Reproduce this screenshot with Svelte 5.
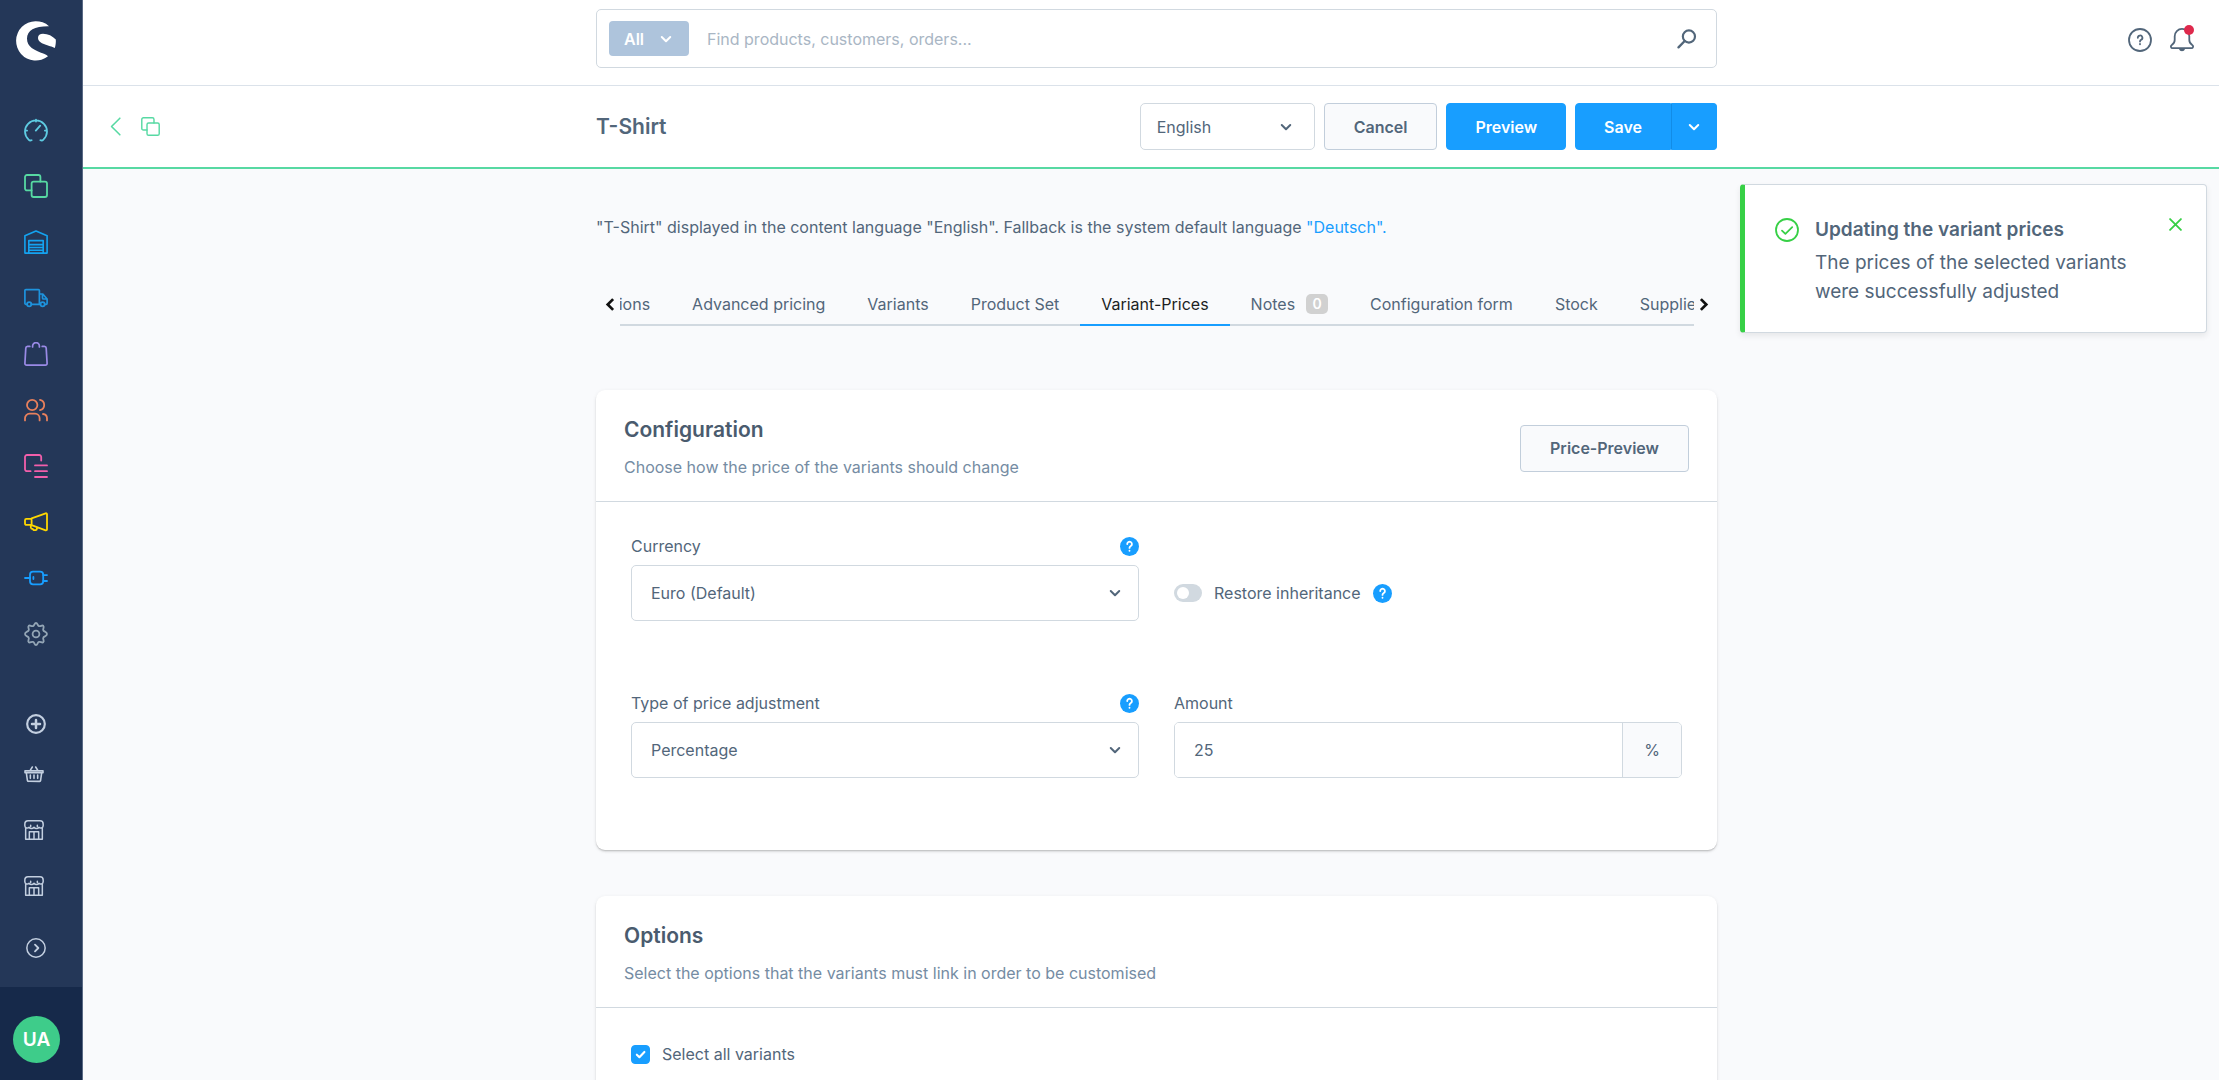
<script>
  import { onMount } from 'svelte';

  const navItems = [
    { name: 'Dashboard', icon: 'gauge', color: '#5ecbe2' },
    { name: 'Catalogues', icon: 'copy', color: '#57d9a3' },
    { name: 'Warehouse', icon: 'warehouse', color: '#14a3f0' },
    { name: 'Shipping', icon: 'truck', color: '#1e93dd' },
    { name: 'Orders', icon: 'bag', color: '#9a8ae6' },
    { name: 'Customers', icon: 'users', color: '#e8805c' },
    { name: 'Content', icon: 'content', color: '#f25fab' },
    { name: 'Marketing', icon: 'megaphone', color: '#ffd700' },
    { name: 'Extensions', icon: 'plug', color: '#189eff' },
    { name: 'Settings', icon: 'gear', color: '#93a5b5' }
  ];

  const channelItems = [
    { name: 'Headless', icon: 'basket' },
    { name: 'Storefront', icon: 'store' },
    { name: 'Second storefront', icon: 'store' }
  ];

  const tabs = [
    { label: 'Specifications' },
    { label: 'Advanced pricing' },
    { label: 'Variants' },
    { label: 'Product Set' },
    { label: 'Variant-Prices' },
    { label: 'Notes', count: 0 },
    { label: 'Configuration form' },
    { label: 'Stock' },
    { label: 'Suppliers' }
  ];

  let activeTab = $state('Variant-Prices');
  let language = $state('English');
  let currency = $state('Euro (Default)');
  let adjustment = $state('Percentage');
  let amount = $state('25');
  let search = $state('');
  let restore = $state(false);
  let selectAll = $state(true);
  let toastOpen = $state(true);
  let tabList;

  onMount(() => {
    // keep the end of the first tab in view, as a hint that there is more to the left
    const second = tabList.children[1];
    tabList.scrollLeft = second.offsetLeft - tabList.offsetLeft - 51;
  });

  function scrollTabs(by) {
    tabList.scrollBy({ left: by, behavior: 'smooth' });
  }
</script>

{#snippet icon(name)}
  <svg class="icon" viewBox="0 0 24 24" fill="none" stroke="currentColor" stroke-width="1.8" stroke-linecap="round" stroke-linejoin="round" aria-hidden="true">
    {#if name === 'gauge'}
      <path d="M7.6 22.2a2.6 2.6 0 0 1-3-.6 11 11 0 1 1 14.8 0 2.6 2.6 0 0 1-3 .6M12 1.600v2M1.100 12.600h2M20.900 12.600h2M11.800 12.600l4.400-5" />
    {:else if name === 'copy'}
      <path d="M7.600 16.400H3a2 2 0 0 1-2-2V3a2 2 0 0 1 2-2h11.400a2 2 0 0 1 2 2v4.600" />
      <rect x="7.600" y="7.600" width="15.400" height="15.400" rx="2" />
    {:else if name === 'warehouse'}
      <path stroke-width="1.600" d="M.9 23.100V5.800L12 1l11.100 4.800v17.300zM4.800 23.100V10.600h14.400v12.500M4.800 14.600h14.400M4.800 17.500h14.400M4.800 20.300h14.400" />
    {:else if name === 'truck'}
      <path stroke-width="1.700" d="M3 18.300H1.900a1 1 0 0 1-1-1V4.600a1 1 0 0 1 1-1h12.500a1 1 0 0 1 1 1v13.700M7.400 18.300h9M15.400 8h3.400l4.300 5v4.300a1 1 0 0 1-1 1h-1.300M23 13h-3.500a1 1 0 0 1-1-1V8" />
      <circle cx="5.200" cy="18.300" r="2.100" /><circle cx="18.600" cy="18.300" r="2.100" />
    {:else if name === 'bag'}
      <path stroke-width="1.700" d="M5.800 4.400H3.600a1.800 1.800 0 0 0-1.800 1.700L.9 21.400A1.700 1.700 0 0 0 2.600 23.100h18.800a1.700 1.700 0 0 0 1.700-1.800l-.9-15.200a1.800 1.800 0 0 0-1.800-1.700h-2.200M8.600 5V4a3.400 3.400 0 0 1 6.800 0v1" />
    {:else if name === 'users'}
      <circle cx="8.200" cy="7" r="5.200" /><path d="M16 1.900a5.200 5.200 0 0 1 0 10.200M1 22.400v-2.200a4.500 4.500 0 0 1 4.500-4.500h5.600a4.500 4.500 0 0 1 4.500 4.500v2.200M19 16a4.500 4.500 0 0 1 4 4.300v2.100" />
    {:else if name === 'content'}
      <path d="M6.600 17.200H3a2 2 0 0 1-2-2V3a2 2 0 0 1 2-2h12.200a2 2 0 0 1 2 2v3.600M11 11.400h12M11 17.200h12M11 23h12" />
    {:else if name === 'megaphone'}
      <path d="M7.600 8.400 21.700 3.300a1 1 0 0 1 1.300 1v15a1 1 0 0 1-1.300 1L7.600 15.200zM7.600 8.900H2.400A1.400 1.400 0 0 0 1 10.300v3.200a1.400 1.400 0 0 0 1.400 1.400h5.200zM6.800 15v2.600a1.800 1.800 0 0 0 1.800 1.400l1.200 1.200h2a1.400 1.400 0 0 0 1.100-1.400v-1.300" />
    {:else if name === 'plug'}
      <path d="M1 12h5M19.200 9.100h3.800M19.200 15h3.800M9.400 11v2" /><rect x="6" y="5.700" width="13.200" height="12.600" rx="3" />
    {:else if name === 'gear'}
      <path d="M12 1c1.700 0 1.300 2.500 2.900 3.100 1.600.7 3.100-1.400 4.400-.3 1.400 1.300-.8 2.900 0 4.500.6 1.500 3.700 1.300 3.700 3.700s-3.100 2.200-3.700 3.700c-.8 1.600 1.400 3.200 0 4.500-1.300 1.100-2.800-1-4.400-.3-1.600.6-1.200 3.100-2.900 3.100s-1.300-2.500-2.900-3.100c-1.600-.7-3.100 1.400-4.400.3-1.400-1.300.8-2.900 0-4.500C4.100 14.200 1 14.400 1 12s3.100-2.200 3.700-3.700c.8-1.600-1.400-3.200 0-4.500 1.300-1.100 2.800 1 4.400.3C10.700 3.500 10.300 1 12 1z" />
      <circle cx="12" cy="12" r="3.400" />
    {:else if name === 'basket'}
      <path stroke-width="1.900" d="M1.200 8.200h21.600v2.200H1.200zM2.800 10.600l1.300 9.200a1.200 1.200 0 0 0 1.200 1h13.400a1.200 1.200 0 0 0 1.200-1l1.300-9.200M7.600 7.400 10 3.600M16.400 7.400 14 3.600M7.600 13.200v4M12 13.200v4M16.400 13.200v4" />
    {:else if name === 'store'}
      <path stroke-width="1.800" d="M2 10.200v12.800h20V10.200M4.800 1h14.400A3.800 3.800 0 0 1 23 4.800v2.100a2.900 2.900 0 0 1-5 1.900 3.800 3.800 0 0 1-6 0 3.800 3.800 0 0 1-6 0 2.900 2.900 0 0 1-5-1.900V4.800A3.800 3.800 0 0 1 4.800 1zM6.400 22.800v-8.600h11.200v8.600M12 14.200v8.600M8 6.400v1.400M16 6.400v1.400" />
    {:else if name === 'plus-circle'}
      <circle cx="12" cy="12" r="10.600" stroke-width="2.600" /><path stroke-width="3" d="M12 7.200v9.600M7.200 12h9.600" />
    {:else if name === 'arrow-circle'}
      <circle cx="12" cy="12" r="11" stroke-width="1.800" /><path stroke-width="2.200" d="m10.800 8 4 4-4 4" />
    {:else if name === 'chevron-left'}
      <path stroke-width="2" d="M17.500 1.500 7 12l10.500 10.500" />
    {:else if name === 'search'}
      <circle cx="14.300" cy="9" r="7.300" stroke-width="2.600" /><path stroke-width="2.800" d="M9.200 14.400 1.800 22" />
    {:else if name === 'help'}
      <circle cx="12" cy="12" r="11" /><path d="M9.800 9.800a2.300 2.300 0 1 1 3.400 2c-.8.500-1.200.9-1.200 1.700M12 16v.3" />
    {:else if name === 'bell'}
      <path d="M2.700 20.200c-1.900 0-2.400-2.200-.9-3.200 1.800-1.200 2.900-2.600 2.900-5V8.200a7.300 7.300 0 0 1 14.600 0V12c0 2.400 1.100 3.800 2.900 5 1.500 1 1 3.200-.9 3.200z" /><path fill="currentColor" d="M9.800 20.800a2.300 2.300 0 0 0 4.400 0z" />
    {:else if name === 'check-circle'}
      <circle cx="12" cy="12" r="11" /><path d="m7 12.600 3.400 3.200 6.800-6.600" />
    {:else if name === 'close'}
      <path stroke-width="3.400" d="M2 2l20 20M22 2 2 22" />
    {:else if name === 'check'}
      <path stroke-width="4.600" d="m4 12.500 5.600 5.500L20.500 6.500" />
    {:else if name === 'question'}
      <path stroke-width="2.600" d="M8.800 8.600a3.300 3.300 0 1 1 5 2.800c-1.200.7-1.800 1.300-1.800 2.600M12 17.900v.2" />
    {:else if name === 'down'}
      <path stroke-width="4" d="M3.500 8l8.500 8.500L20.500 8" />
    {:else if name === 'left'}
      <path stroke-width="5" stroke-linecap="butt" stroke-linejoin="miter" d="M15 2 5 12l10 10" />
    {:else if name === 'right'}
      <path stroke-width="5" stroke-linecap="butt" stroke-linejoin="miter" d="M9 2l10 10L9 22" />
    {/if}
  </svg>
{/snippet}

{#snippet helpDot(label)}
  <button type="button" class="help-dot" aria-label={label}>{@render icon('question')}</button>
{/snippet}

<div class="app">
  <aside class="sidebar">
    <a class="logo" href="#home" aria-label="Home">
      <svg viewBox="0 0 40 40" fill="#fff" aria-hidden="true">
        <path d="M33 5.200A19.700 19.700 0 1 0 32 35.300Q31 34 28 32.800C18 29 11 26 11 17.500 11 9 19 5 33 5.200z" />
        <path d="M22 16.800C22 14.200 24 12.700 27 12.700c5 0 9.500 2.300 12.800 5.800.2 3-.1 5.800-1 8.500C34 24.300 22 23.500 22 16.800z" />
      </svg>
    </a>
    <nav class="nav" aria-label="Main">
      {#each navItems as item}
        <a class="nav-item" href="#{item.icon}" aria-label={item.name} style:color={item.color}>{@render icon(item.icon)}</a>
      {/each}
    </nav>
    <nav class="channels" aria-label="Sales channels">
      <button type="button" class="round add" aria-label="Add sales channel">{@render icon('plus-circle')}</button>
      {#each channelItems as item}
        <a class="nav-item channel" href="#{item.icon}" aria-label={item.name}>{@render icon(item.icon)}</a>
      {/each}
      <button type="button" class="round expand" aria-label="Expand menu">{@render icon('arrow-circle')}</button>
    </nav>
    <div class="user">
      <button type="button" class="avatar" aria-label="User menu">UA</button>
    </div>
  </aside>

  <div class="page">
    <header class="topbar columns">
      <form class="search" role="search" onsubmit={(e) => e.preventDefault()}>
        <button type="button" class="scope">All {@render icon('down')}</button>
        <input type="search" aria-label="Search" placeholder="Find products, customers, orders..." bind:value={search} />
        <button type="submit" class="search-go" aria-label="Search">{@render icon('search')}</button>
      </form>
      <div class="top-actions">
        <button type="button" aria-label="Help">{@render icon('help')}</button>
        <button type="button" aria-label="Notifications">{@render icon('bell')}<span class="dot"></span></button>
      </div>
    </header>

    <div class="smartbar columns">
      <div class="smart-left">
        <a href="#back" aria-label="Back">{@render icon('chevron-left')}</a>
        <a href="#products" aria-label="Products">{@render icon('copy')}</a>
      </div>
      <div class="smart-main">
        <h1>T-Shirt</h1>
        <div class="smart-actions">
          <div class="select language">
            <select aria-label="Language" bind:value={language}>
              <option>English</option>
              <option>Deutsch</option>
            </select>
            {@render icon('down')}
          </div>
          <button type="button" class="btn">Cancel</button>
          <button type="button" class="btn primary preview">Preview</button>
          <div class="split">
            <button type="button" class="btn primary">Save</button>
            <button type="button" class="btn primary more" aria-label="More save options">{@render icon('down')}</button>
          </div>
        </div>
      </div>
    </div>

    <main class="content columns">
      <div class="center">
        <p class="info">"T-Shirt" displayed in the content language "English". Fallback is the system default language <a href="#deutsch">"Deutsch".</a></p>

        <div class="tabs">
          <button type="button" class="tab-arrow" aria-label="Scroll left" onclick={() => scrollTabs(-200)}>{@render icon('left')}</button>
          <div class="tab-list" role="tablist" bind:this={tabList}>
            {#each tabs as tab}
              <button type="button" role="tab" class="tab" class:active={tab.label === activeTab} aria-selected={tab.label === activeTab} onclick={() => (activeTab = tab.label)}>
                {tab.label}{#if tab.count !== undefined}<span class="count">{tab.count}</span>{/if}
              </button>
            {/each}
          </div>
          <button type="button" class="tab-arrow next" aria-label="Scroll right" onclick={() => scrollTabs(200)}>{@render icon('right')}</button>
        </div>

        <section class="card">
          <header class="card-head">
            <div>
              <h2>Configuration</h2>
              <p>Choose how the price of the variants should change</p>
            </div>
            <button type="button" class="btn">Price-Preview</button>
          </header>
          <div class="card-body form">
            <div class="field">
              <div class="label-row"><label for="currency">Currency</label>{@render helpDot('Help for currency')}</div>
              <div class="select">
                <select id="currency" bind:value={currency}>
                  <option>Euro (Default)</option>
                  <option>US-Dollar</option>
                </select>
                {@render icon('down')}
              </div>
            </div>
            <div class="toggle-row">
              <label class="toggle"><input type="checkbox" role="switch" bind:checked={restore} />Restore inheritance</label>
              {@render helpDot('Help for inheritance')}
            </div>
            <div class="field">
              <div class="label-row"><label for="adjustment">Type of price adjustment</label>{@render helpDot('Help for type of price adjustment')}</div>
              <div class="select">
                <select id="adjustment" bind:value={adjustment}>
                  <option>Percentage</option>
                  <option>Absolute</option>
                </select>
                {@render icon('down')}
              </div>
            </div>
            <div class="field">
              <div class="label-row"><label for="amount">Amount</label></div>
              <div class="amount">
                <input id="amount" type="text" inputmode="decimal" bind:value={amount} />
                <span class="unit">%</span>
              </div>
            </div>
          </div>
        </section>

        <section class="card">
          <header class="card-head">
            <div>
              <h2>Options</h2>
              <p>Select the options that the variants must link in order to be customised</p>
            </div>
          </header>
          <div class="card-body">
            <label class="check">
              <span class="box"><input type="checkbox" bind:checked={selectAll} />{#if selectAll}{@render icon('check')}{/if}</span>
              Select all variants
            </label>
          </div>
        </section>
      </div>
    </main>
  </div>

  {#if toastOpen}
    <div class="toast" role="status">
      <span class="toast-icon">{@render icon('check-circle')}</span>
      <div class="toast-text">
        <strong>Updating the variant prices</strong>
        <p>The prices of the selected variants were successfully adjusted</p>
      </div>
      <button type="button" class="toast-close" aria-label="Close" onclick={() => (toastOpen = false)}>{@render icon('close')}</button>
    </div>
  {/if}
</div>

<style>
  :global(body) {
    margin: 0;
  }

  .app {
    --text: #52667a;
    --line: #d1d9e0;
    --blue: #189eff;
    --surface: #f9fafc;
    display: flex;
    height: 100vh;
    overflow: hidden;
    position: relative;
    background: var(--surface);
    color: var(--text);
    font-family: Inter, 'Liberation Sans', sans-serif;
    font-size: 16px;
    line-height: 24px;
  }

  .app :global(*) {
    box-sizing: border-box;
  }

  button,
  input,
  select {
    font: inherit;
    color: inherit;
    margin: 0;
  }

  button {
    display: inline-flex;
    align-items: center;
    justify-content: center;
    padding: 0;
    border: 0;
    background: none;
    cursor: pointer;
  }

  a {
    color: inherit;
    text-decoration: none;
  }

  h1,
  h2,
  p {
    margin: 0;
  }

  .icon {
    display: block;
    flex: none;
    width: 24px;
    height: 24px;
  }

  /* sidebar */
  .sidebar {
    flex: none;
    display: flex;
    flex-direction: column;
    width: 83px;
    background: #243758;
    border-right: 1px solid #5a6a85;
  }

  .logo {
    padding: 21px 16px 41px;
  }

  .logo svg {
    display: block;
    width: 40px;
    height: 40px;
  }

  .nav,
  .channels {
    display: flex;
    flex-direction: column;
  }

  .nav {
    padding-bottom: 40px;
  }

  .nav-item {
    display: flex;
    align-items: center;
    height: 56px;
    padding-left: 24px;
  }

  .channels {
    color: #c3cfe0;
  }

  .channel .icon,
  .round .icon {
    width: 20px;
    height: 20px;
  }

  .round {
    justify-content: flex-start;
    height: 44px;
    padding-left: 26px;
  }

  .expand {
    height: 68px;
  }

  .user {
    margin-top: auto;
    padding: 29px 13px 17px;
    background: #16294a;
  }

  .avatar {
    width: 47px;
    height: 47px;
    border-radius: 50%;
    background: #3ecc8a;
    color: #fff;
    font-size: 19px;
    font-weight: 600;
  }

  /* shared page grid: gutter, centred column, gutter */
  .page {
    flex: 1;
    min-width: 0;
    display: flex;
    flex-direction: column;
  }

  .columns {
    display: grid;
    grid-template-columns: minmax(0, 1fr) minmax(0, 1121px) minmax(0, 1fr);
    padding-left: 11px;
  }

  .topbar {
    flex: none;
    height: 86px;
    padding-top: 9px;
    align-items: start;
    background: #fff;
    border-bottom: 1px solid #dbe2ea;
  }

  .search {
    grid-column: 2;
    display: flex;
    align-items: center;
    height: 59px;
    padding: 0 19px 0 12px;
    border: 1px solid var(--line);
    border-radius: 5px;
  }

  .scope {
    justify-content: space-between;
    width: 80px;
    height: 35px;
    padding: 0 17px 0 15px;
    border-radius: 4px;
    background: #aec4dc;
    color: #fff;
    font-weight: 600;
  }

  .scope .icon {
    width: 12px;
    height: 12px;
  }

  .search input {
    flex: 1;
    min-width: 0;
    padding: 0 18px;
    border: 0;
    outline: 0;
    background: none;
  }

  .search input::placeholder {
    color: #a9b6c4;
    opacity: 1;
  }

  .search-go .icon {
    width: 20px;
    height: 20px;
  }

  .top-actions {
    grid-column: 3;
    justify-self: end;
    display: flex;
    gap: 18px;
    padding: 19px 25px 0 0;
  }

  .top-actions button {
    position: relative;
  }

  .dot {
    position: absolute;
    top: -3px;
    right: 0;
    width: 10px;
    height: 10px;
    border-radius: 50%;
    background: #de294c;
  }

  .smartbar {
    flex: none;
    height: 83px;
    align-items: center;
    background: #fff;
    border-bottom: 2px solid #57d9a3;
  }

  .smart-left {
    display: flex;
    align-items: center;
    gap: 16px;
    padding-left: 12px;
    color: #57d9a3;
  }

  .smart-left .icon {
    width: 19px;
    height: 19px;
  }

  .smart-main {
    grid-column: 2;
    display: flex;
    align-items: center;
    justify-content: space-between;
  }

  h1 {
    font-size: 21px;
    font-weight: 600;
    line-height: 26px;
  }

  .smart-actions {
    display: flex;
    gap: 9px;
  }

  .btn {
    height: 47px;
    padding: 0 29px;
    border: 1px solid #c2cedb;
    border-radius: 4px;
    background: var(--surface);
    font-weight: 600;
    white-space: nowrap;
  }

  .primary {
    padding: 0 28px;
    border-color: var(--blue);
    background: var(--blue);
    color: #fff;
  }

  .split {
    display: flex;
  }

  .split .btn:first-child {
    border-radius: 4px 0 0 4px;
  }

  .split .more {
    width: 46px;
    padding: 0;
    border-left-color: #128ce6;
    border-radius: 0 4px 4px 0;
  }

  .more .icon,
  .select .icon {
    width: 12px;
    height: 12px;
  }

  .select {
    position: relative;
  }

  .select select {
    display: block;
    width: 100%;
    height: 56px;
    padding: 0 48px 0 19px;
    border: 1px solid var(--line);
    border-radius: 5px;
    background: #fff;
    appearance: none;
  }

  .select .icon {
    position: absolute;
    top: calc(50% - 6px);
    right: 18px;
    pointer-events: none;
  }

  .language {
    width: 175px;
  }

  .language select {
    height: 47px;
    padding-left: 16px;
  }

  .language .icon {
    right: 23px;
  }

  /* content */
  .content {
    flex: 1;
    min-height: 0;
    overflow: hidden;
  }

  .center {
    grid-column: 2;
  }

  .info {
    padding: 46px 0 44px;
  }

  .info a {
    color: var(--blue);
  }

  .tabs {
    display: flex;
    align-items: center;
    padding: 0 8px 0 9px;
    margin-bottom: 64px;
  }

  .tab-arrow {
    flex: none;
    justify-content: flex-start;
    width: 15px;
    height: 24px;
    color: #111;
  }

  .tab-arrow.next {
    justify-content: flex-end;
  }

  .tab-arrow .icon {
    width: 13px;
    height: 13px;
  }

  .tab-list {
    flex: 1;
    min-width: 0;
    display: flex;
    overflow: hidden;
  }

  .tab {
    flex: none;
    height: 43px;
    padding: 0 21px;
    border-bottom: 2px solid var(--line);
    white-space: nowrap;
  }

  .tab.active {
    border-color: var(--blue);
    color: #1c1f23;
  }

  .count {
    width: 22px;
    height: 20px;
    margin-left: 11px;
    border-radius: 5px;
    background: #d1d1d1;
    color: #fff;
    font-size: 14px;
    font-weight: 600;
    line-height: 20px;
  }

  .card {
    margin-bottom: 46px;
    border-radius: 9px;
    background: #fff;
    box-shadow: 0 1px 1px rgba(0, 0, 0, 0.12), 0 2px 2px rgba(0, 0, 0, 0.08), 0 1px 4px rgba(0, 0, 0, 0.07);
  }

  .card-head {
    display: flex;
    align-items: center;
    justify-content: space-between;
    padding: 27px 28px 22px;
    border-bottom: 1px solid var(--line);
  }

  h2 {
    margin-bottom: 12px;
    color: #4a5b6e;
    font-size: 21px;
    font-weight: 600;
    line-height: 26px;
  }

  .card-head p {
    color: #758ca3;
  }

  .card-body {
    padding: 34px 35px 72px;
  }

  .form {
    display: grid;
    grid-template-columns: repeat(2, minmax(0, 1fr));
    gap: 72px 35px;
  }

  .label-row {
    display: flex;
    align-items: center;
    justify-content: space-between;
    height: 20px;
    margin-bottom: 9px;
  }

  .help-dot {
    flex: none;
    width: 19px;
    height: 19px;
    border-radius: 50%;
    background: var(--blue);
    color: #fff;
  }

  .help-dot .icon {
    width: 17px;
    height: 17px;
  }

  .toggle-row {
    align-self: end;
    display: flex;
    align-items: center;
    gap: 12px;
    height: 56px;
  }

  .toggle,
  .check {
    display: flex;
    align-items: center;
    gap: 12px;
  }

  .toggle input {
    flex: none;
    display: flex;
    align-items: center;
    width: 28px;
    height: 18px;
    padding: 0 3px;
    border-radius: 9px;
    background: var(--line);
    appearance: none;
  }

  .toggle input::before {
    content: '';
    width: 12px;
    height: 12px;
    border-radius: 50%;
    background: #fff;
  }

  .toggle input:checked {
    justify-content: flex-end;
    background: var(--blue);
  }

  .amount {
    display: flex;
    height: 56px;
    border: 1px solid var(--line);
    border-radius: 5px;
    overflow: hidden;
  }

  .amount input {
    flex: 1;
    min-width: 0;
    padding: 0 19px;
    border: 0;
    outline: 0;
  }

  .unit {
    display: flex;
    align-items: center;
    justify-content: center;
    width: 59px;
    border-left: 1px solid var(--line);
    background: var(--surface);
  }

  .box {
    position: relative;
    width: 19px;
    height: 19px;
  }

  .box input {
    display: block;
    width: 19px;
    height: 19px;
    border: 1px solid var(--line);
    border-radius: 4px;
    appearance: none;
  }

  .box input:checked {
    border-color: var(--blue);
    background: var(--blue);
  }

  .box .icon {
    position: absolute;
    inset: 4px;
    width: 11px;
    height: 11px;
    color: #fff;
    pointer-events: none;
  }

  /* notification */
  .toast {
    position: absolute;
    top: 184px;
    right: 12px;
    display: flex;
    align-items: flex-start;
    width: 467px;
    padding: 30px 24px 26px 30px;
    border: 1px solid var(--line);
    border-left: 5px solid #37d046;
    border-radius: 4px;
    background: #fff;
    box-shadow: 0 3px 6px rgba(0, 0, 0, 0.08);
    font-size: 19px;
    line-height: 29px;
  }

  .toast-icon,
  .toast-close {
    flex: none;
    color: #37d046;
  }

  .toast-icon {
    padding-top: 3px;
  }

  .toast-text {
    flex: 1;
    padding: 0 40px 0 16px;
  }

  .toast strong {
    display: block;
    margin-bottom: 4px;
    font-weight: 600;
  }

  .toast-close {
    padding-top: 3px;
  }

  .toast-close .icon {
    width: 13px;
    height: 13px;
  }
</style>
